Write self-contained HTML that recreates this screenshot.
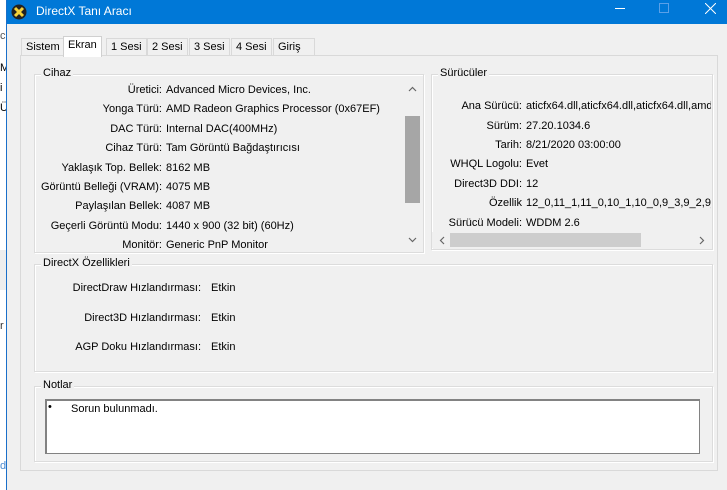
<!DOCTYPE html>
<html><head><meta charset="utf-8"><style>
*{box-sizing:border-box;margin:0;padding:0}
body{width:727px;height:490px;overflow:hidden;background:#fff;font-family:"Liberation Sans",sans-serif;font-size:11px;color:#000;position:relative}
.a{position:absolute}
.win{left:6px;top:0;width:721px;height:490px;background:#f0f0f0;border-left:1px solid #1a6fc9}
.title{left:0;top:0;width:721px;height:24px;background:#0078d7;color:#fff;font-size:12px}
.grp{border:1px solid #dcdcdc;box-shadow:inset 1px 1px 0 #fff,1px 1px 0 #fff}
.lg{background:#f0f0f0;padding:0 2px;top:-8px;left:6px}
.r{position:absolute;white-space:nowrap}
.l{text-align:right}
.tab{position:absolute;top:38px;height:18px;border:1px solid #d9d9d9;border-bottom:none;background:#f0f0f0;padding:2px 4px 0;font-size:11px}
</style></head><body>
<div class="a" style="left:0;top:30px;color:#555">c</div>
<div class="a" style="left:0;top:62px">M</div>
<div class="a" style="left:0;top:82px">i</div>
<div class="a" style="left:0;top:102px">Ü</div>
<div class="a" style="left:0;top:250px;width:6px;height:40px;background:#eee"></div>
<div class="a" style="left:0;top:320px;color:#333">r</div>
<div class="a" style="left:0;top:460px;color:#4a8ad0">d</div>
<div class="a win">
 <div class="a title">
  <svg class="a" style="left:4px;top:4px" width="16" height="16" viewBox="0 0 16 16"><circle cx="8" cy="8" r="7.5" fill="#222"/><path d="M4 4L12 12M12 4L4 12" stroke="#f4d23a" stroke-width="3"/></svg>
  <span class="a" style="left:29px;top:4px">DirectX Tanı Aracı</span>
  <div class="a" style="left:608px;top:8px;width:10px;height:1px;background:#fff"></div>
  <div class="a" style="left:652px;top:3px;width:10px;height:10px;border:1px solid #5aa0e8"></div>
  <svg class="a" style="left:698px;top:3px" width="11" height="11"><path d="M0 0L11 11M11 0L0 11" stroke="#fff" stroke-width="1"/></svg>
 </div>
 <div class="tab" style="left:14px">Sistem</div>
 <div class="tab" style="left:56px;top:36px;height:21px;z-index:2;border-color:#d0d0d0;background:#fff">Ekran</div>
 <div class="tab" style="left:99px">1 Sesi</div>
 <div class="tab" style="left:140px">2 Sesi</div>
 <div class="tab" style="left:182px">3 Sesi</div>
 <div class="tab" style="left:224px">4 Sesi</div>
 <div class="tab" style="left:266px;width:42px">Giriş</div>
 <div class="a" style="left:13px;top:55px;width:698px;height:416px;border:1px solid #d9d9d9;background:#f0f0f0"></div>
 <!-- Cihaz -->
 <div class="a grp" style="left:27px;top:74px;width:390px;height:179px">
  <span class="a lg">Cihaz</span>
 </div>
 <div class="a" style="left:28px;top:80px;width:388px;height:170px;overflow:hidden">
  <div class="r l" style="right:261px;top:4px">Üretici:</div><div class="r" style="left:131px;top:4px">Advanced Micro Devices, Inc.</div>
  <div class="r l" style="right:261px;top:23px">Yonga Türü:</div><div class="r" style="left:131px;top:23px">AMD Radeon Graphics Processor (0x67EF)</div>
  <div class="r l" style="right:261px;top:43px">DAC Türü:</div><div class="r" style="left:131px;top:43px">Internal DAC(400MHz)</div>
  <div class="r l" style="right:261px;top:62px">Cihaz Türü:</div><div class="r" style="left:131px;top:62px">Tam Görüntü Bağdaştırıcısı</div>
  <div class="r l" style="right:261px;top:82px">Yaklaşık Top. Bellek:</div><div class="r" style="left:131px;top:82px">8162 MB</div>
  <div class="r l" style="right:261px;top:101px">Görüntü Belleği (VRAM):</div><div class="r" style="left:131px;top:101px">4075 MB</div>
  <div class="r l" style="right:261px;top:120px">Paylaşılan Bellek:</div><div class="r" style="left:131px;top:120px">4087 MB</div>
  <div class="r l" style="right:261px;top:140px">Geçerli Görüntü Modu:</div><div class="r" style="left:131px;top:140px">1440 x 900 (32 bit) (60Hz)</div>
  <div class="r l" style="right:261px;top:159px">Monitör:</div><div class="r" style="left:131px;top:159px">Generic PnP Monitor</div>
  <div class="a" style="left:369px;top:0;width:17px;height:170px;background:#f0f0f0"></div>
  <svg class="a" style="left:373px;top:6px" width="9" height="6"><path d="M1 5L4.5 1.5L8 5" stroke="#666" fill="none" stroke-width="1.2"/></svg>
  <div class="a" style="left:370px;top:36px;width:15px;height:87px;background:#a6a6a6"></div>
  <svg class="a" style="left:373px;top:157px" width="9" height="6"><path d="M1 1L4.5 4.5L8 1" stroke="#666" fill="none" stroke-width="1.2"/></svg>
 </div>
 <!-- Surucular -->
 <div class="a grp" style="left:424px;top:74px;width:282px;height:176px"><span class="a lg">Sürücüler</span></div>
 <div class="a" style="left:425px;top:80px;width:279px;height:168px;overflow:hidden">
  <div class="r l" style="right:189px;top:20px">Ana Sürücü:</div><div class="r" style="left:94px;top:20px">aticfx64.dll,aticfx64.dll,aticfx64.dll,amdxc64.dll</div>
  <div class="r l" style="right:189px;top:40px">Sürüm:</div><div class="r" style="left:94px;top:40px">27.20.1034.6</div>
  <div class="r l" style="right:189px;top:59px">Tarih:</div><div class="r" style="left:94px;top:59px">8/21/2020 03:00:00</div>
  <div class="r l" style="right:189px;top:78px">WHQL Logolu:</div><div class="r" style="left:94px;top:78px">Evet</div>
  <div class="r l" style="right:189px;top:98px">Direct3D DDI:</div><div class="r" style="left:94px;top:98px">12</div>
  <div class="r l" style="right:189px;top:117px">Özellik</div><div class="r" style="left:94px;top:117px">12_0,11_1,11_0,10_1,10_0,9_3,9_2,9_1</div>
  <div class="r l" style="right:189px;top:137px">Sürücü Modeli:</div><div class="r" style="left:94px;top:137px">WDDM 2.6</div>
  <div class="a" style="left:0;top:152px;width:279px;height:16px;background:#f0f0f0"></div>
  <svg class="a" style="left:7px;top:156px" width="6" height="9"><path d="M5 1L1.5 4.5L5 8" stroke="#666" fill="none" stroke-width="1.2"/></svg>
  <div class="a" style="left:18px;top:153px;width:191px;height:14px;background:#cdcdcd"></div>
  <svg class="a" style="left:267px;top:156px" width="6" height="9"><path d="M1 1L4.5 4.5L1 8" stroke="#666" fill="none" stroke-width="1.2"/></svg>
 </div>
 <!-- DirectX -->
 <div class="a grp" style="left:27px;top:264px;width:679px;height:108px"><span class="a lg">DirectX Özellikleri</span>
  <div class="r l" style="right:511px;top:17px">DirectDraw Hızlandırması:</div><div class="r" style="left:176px;top:17px">Etkin</div>
  <div class="r l" style="right:511px;top:47px">Direct3D Hızlandırması:</div><div class="r" style="left:176px;top:47px">Etkin</div>
  <div class="r l" style="right:511px;top:76px">AGP Doku Hızlandırması:</div><div class="r" style="left:176px;top:76px">Etkin</div>
 </div>
 <!-- Notlar -->
 <div class="a grp" style="left:27px;top:386px;width:679px;height:76px"><span class="a lg">Notlar</span>
  <div class="a" style="left:10px;top:12px;width:655px;height:55px;background:#fff;border:1px solid #828282;border-left-width:2px;border-top-width:2px">
   <span class="a" style="left:1px;top:0">•</span><span class="a" style="left:24px;top:2px">Sorun bulunmadı.</span>
  </div>
 </div>
</div>
</body></html>
